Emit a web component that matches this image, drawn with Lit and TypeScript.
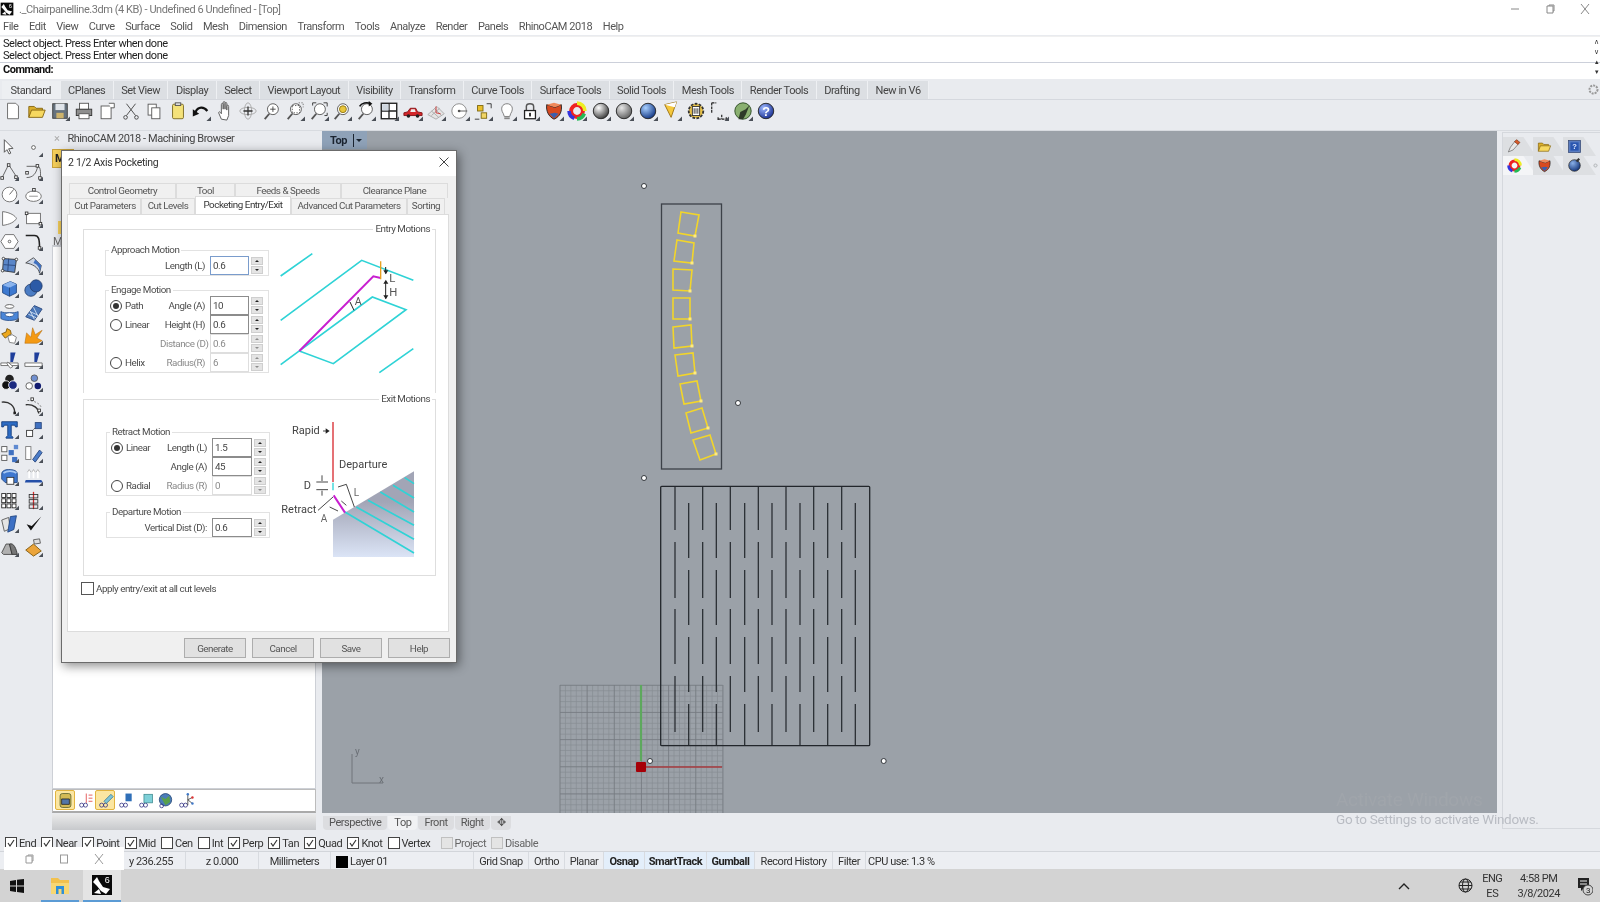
import { LitElement, html, css, svg } from 'lit';
import { customElement } from 'lit/decorators.js';

/* ---------- icons, all on a 22x22 box ---------- */
const G = '#4a4f57';
const page = (x: number, y: number, w: number, h: number) => svg`<rect x=${x} y=${y} width=${w} height=${h} fill="#fff" stroke="#5a5a5a"/>`;
const glass = (inner: unknown = '') => svg`<circle cx="12" cy="9" r="6" fill="#fff" stroke="#555"/><path d="M8 14l-5 6" stroke="#555" stroke-width="2"/>${inner}`;
const ball = (hi: string, lo: string, id: string) => svg`<defs><radialGradient id=${id} cx=".35" cy=".3" r=".8"><stop offset="0" stop-color=${hi}/><stop offset="1" stop-color=${lo}/></radialGradient></defs><circle cx="11" cy="11" r="8.5" fill="url(#${id})" stroke="#222"/>`;

const ICONS: Record<string, unknown> = {
  new: svg`<path d="M5 2.5h9l3 3v14H5z" fill="#fff" stroke="#666"/>`,
  open: svg`<path d="M2 18V6h6l2 2h7v3" fill="#d9ae2c" stroke="#84640f"/><path d="M2 18l3-8h15l-3 8z" fill="#f6d860" stroke="#84640f"/>`,
  save: svg`<rect x="3" y="3" width="16" height="16" fill="#66727e" stroke="#3c3c3c"/><rect x="6" y="3" width="10" height="7" fill="#dfe4ea"/><rect x="7" y="13" width="8" height="6" fill="#cdb36c"/>`,
  print: svg`<rect x="6" y="2.5" width="10" height="7" fill="#fff" stroke="#555"/><rect x="2.5" y="9" width="17" height="7" fill="#8e8e8e" stroke="#333"/><rect x="5.5" y="14" width="11" height="5.5" fill="#fff" stroke="#555"/>`,
  pagecopy: svg`${page(4.5, 5.5, 11, 14)}<path d="M13 2.5h6v5h-4" fill="#fff" stroke="#555"/>`,
  cut: svg`<path d="M6 3l10 13M16 3L6 16" stroke="#444" fill="none"/><circle cx="5" cy="18" r="2" fill="none" stroke="#444"/><circle cx="17" cy="18" r="2" fill="none" stroke="#444"/>`,
  copy: svg`${page(4.5, 3.5, 9, 12)}${page(8.5, 7.5, 9, 12)}`,
  paste: svg`<rect x="5" y="3.5" width="12" height="16" rx="1.5" fill="#f4e27a" stroke="#7a6a20"/><rect x="8" y="2" width="6" height="3" fill="#ddd" stroke="#555"/>`,
  undo: svg`<path d="M5 12c3-6 9-6 13-1" fill="none" stroke="#111" stroke-width="2.4"/><path d="M2 9l7 5-7 3z" fill="#111"/>`,
  hand: svg`<path d="M7 20l-3-7c0-2 2-1 3 1V4c0-2 2-2 2 0v5-7c0-2 2-2 2 0v7-6c0-2 2-2 2 0v7-4c0-2 2-2 2 0v10l-2 5z" fill="#fff" stroke="#555"/>`,
  orbit: svg`<ellipse cx="11" cy="11" rx="9" ry="4" fill="none" stroke="#a8a8a8"/><ellipse cx="11" cy="11" rx="4" ry="9" fill="none" stroke="#a8a8a8"/><path d="M11 6v10M6 11h10" stroke="#333" stroke-width="1.4"/>`,
  zoomin: glass(svg`<path d="M9 9h6M12 6v6" stroke="#444"/>`),
  zoomwin: glass(svg`<rect x="8" y="5" width="8" height="8" fill="none" stroke="#555" stroke-dasharray="1.5 1.5"/><path d="M15 2h5v5" fill="none" stroke="#777" stroke-dasharray="1.5 1.5"/>`),
  zoomext: glass(svg`<path d="M4 5V2h4M16 2h4v4M20 13v3h-3" fill="none" stroke="#333"/>`),
  zoomsel: glass(svg`<circle cx="12" cy="9" r="3.8" fill="#e9c63c" stroke="#8e7412"/>`),
  zoomback: glass(svg`<path d="M4 6c2-4 8-5 12-3" fill="none" stroke="#111" stroke-width="1.8"/><path d="M14 0l4 3-4 3z" fill="#111"/>`),
  panes: svg`<rect x="2.5" y="2.5" width="17" height="17" fill="#fff" stroke="#222" stroke-width="1.5"/><path d="M11 2.5v17M2.5 11h17" stroke="#222" stroke-width="1.5"/><rect x="3.5" y="3.5" width="7" height="7" fill="#cfd6de"/>`,
  car: svg`<path d="M1 13l4-1 3-4h6l2 4 5 1v3H1z" fill="#d3262a" stroke="#851316"/><circle cx="6" cy="16.5" r="2" fill="#222"/><circle cx="16" cy="16.5" r="2" fill="#222"/><path d="M9 9h4l1 3H8z" fill="#eee"/>`,
  cplane: svg`<path d="M2 15l10-9 8 8-9 6z" fill="#e4e4e4" stroke="#aaa"/><path d="M6 11l8 7M9 8l8 8M6 16l9-8" stroke="#aaa" fill="none"/><path d="M11 13V6M11 13l5 1" stroke="#c33" fill="none"/>`,
  target: svg`<circle cx="10" cy="11" r="8" fill="#fff" stroke="#888"/><path d="M10 11h9" stroke="#555"/><circle cx="10" cy="11" r="1.5" fill="#555"/>`,
  points: svg`<rect x="5" y="5" width="6" height="6" fill="#e9bf2c" stroke="#806a10"/><rect x="9" y="13" width="6" height="6" fill="#f1d565" stroke="#806a10"/><path d="M15 3h5v5M2 20h5" stroke="#333" fill="none"/>`,
  bulb: svg`<path d="M7 14C3 8 6 3 11 3s8 5 4 11l-1 3H8z" fill="#fff" stroke="#777"/><path d="M8 18h6v2H8z" fill="#888"/>`,
  lock: svg`<path d="M7 11V6c0-4 8-4 8 0v5" fill="none" stroke="#555" stroke-width="1.6"/><rect x="5" y="10.5" width="12" height="9" fill="#fff" stroke="#222" stroke-width="1.4"/><rect x="10" y="13" width="2" height="4" fill="#222"/>`,
  shield: svg`<path d="M3 4l9 3 7-3c1 7-1 13-8 16C5 17 2 11 3 4z" fill="#d84a20" stroke="#222"/><path d="M3 4l9 3 7-3-8-2z" fill="#f08a5c"/><path d="M6 14l6-1 4 1-5 5z" fill="#3b5fae"/>`,
  wheel: svg`<circle cx="11" cy="11" r="6.5" fill="none" stroke="#e22" stroke-width="4.4"/><path d="M11 2.3a8.7 8.7 0 0 1 8.7 8.7" fill="none" stroke="#ee2" stroke-width="4"/><path d="M19 14a8.7 8.7 0 0 1-8 5.7" fill="none" stroke="#2b5" stroke-width="4"/><path d="M8 19a8.7 8.7 0 0 1-5.7-8" fill="none" stroke="#33d" stroke-width="4"/>`,
  sphere1: ball('#ffffff', '#2b2b2b', 'sa'),
  sphere2: ball('#e6e6e6', '#555555', 'sb'),
  sphere3: ball('#a8d0ff', '#062a7a', 'sc'),
  cone: svg`<path d="M3 4l13-3-6 17z" fill="#f5c83c" stroke="#9a6f10"/><path d="M3 4l13-3-2 6z" fill="#fff"/>`,
  gear: svg`<circle cx="11" cy="11" r="8" fill="#e7c24a" stroke="#333" stroke-dasharray="3 1.5" stroke-width="2"/><rect x="7" y="6" width="8" height="10" fill="#fff" stroke="#333"/><path d="M9 8v6M11 8v6M13 8v6" stroke="#333"/>`,
  dim: svg`<path d="M3 2h5M3 2v11M10 20h9M14 15v5M10 18v4M19 18v4" fill="none" stroke="#222" stroke-width="1.3" stroke-dasharray="3 1"/>`,
  earth: svg`<circle cx="11" cy="11" r="9" fill="#8ab070" stroke="#2b4a22"/><path d="M6 20l2-8 6-3 4-4-4 10-3 5z" fill="#2e3a28"/>`,
  help: svg`${ball('#9db8ff', '#10268a', 'sd')}<text x="11" y="16" text-anchor="middle" font-size="14" font-weight="700" fill="#fff" font-family="Liberation Sans">?</text>`,
  pick: svg`<path d="M5 2l10 10-5 .5 2.5 5-2 1-2.5-5-3 3z" fill="#fff" stroke="#444"/>`,
  dot: svg`<circle cx="11" cy="11" r="2.2" fill="#fff" stroke="#555"/>`,
  polyline: svg`<path d="M2 19L10 3l9 14" fill="none" stroke="#555"/><rect x="8.5" y="2" width="3" height="3" fill="#fff" stroke="#333"/><rect x="1" y="17" width="3" height="3" fill="#fff" stroke="#333"/><rect x="17" y="16" width="3" height="3" fill="#fff" stroke="#333"/>`,
  curve: svg`<path d="M3 5h13c4 0 3 11 3 13M3 18c8 0 11-5 13-13" fill="none" stroke="#555"/><rect x="14" y="3" width="3" height="3" fill="#fff" stroke="#333"/><rect x="2" y="11" width="3" height="3" fill="#fff" stroke="#333"/><rect x="17" y="17" width="3" height="3" fill="#fff" stroke="#333"/>`,
  circle: svg`<circle cx="11" cy="11" r="8.5" fill="#fff" stroke="#666"/><path d="M11 11l5-6" stroke="#555"/>`,
  ellipse: svg`<ellipse cx="11" cy="13" rx="9" ry="6" fill="#fff" stroke="#666"/><path d="M6 13h10" stroke="#888"/><rect x="10" y="4" width="3" height="3" fill="#fff" stroke="#333"/>`,
  dshape: svg`<path d="M3 3c9 1 15 5 16 8-2 4-8 7-16 8z" fill="#fff" stroke="#666"/>`,
  rect: svg`<rect x="3" y="5" width="16" height="12" fill="#fff" stroke="#666"/><rect x="1.5" y="3.5" width="3" height="3" fill="#fff" stroke="#333"/><rect x="17.5" y="15.5" width="3" height="3" fill="#fff" stroke="#333"/>`,
  hex: svg`<path d="M6 3h10l5 8-5 8H6l-5-8z" fill="#fff" stroke="#666"/><circle cx="11" cy="11" r="1.5" fill="none" stroke="#555"/>`,
  fillet: svg`<path d="M2 4h10c5 0 6 4 6 15" fill="none" stroke="#222" stroke-width="1.8"/><rect x="16.5" y="17" width="3" height="3" fill="#fff" stroke="#333"/><path d="M2 8" stroke="#999"/>`,
  patch: svg`<path d="M4 3l15 1-2 15L3 17z" fill="#5a86c8" stroke="#333"/><path d="M4 10l14 1M10 3l-1 15" stroke="#28467c"/><circle cx="4" cy="3" r="1.5" fill="#fff" stroke="#333"/><circle cx="19" cy="4" r="1.5" fill="#fff" stroke="#333"/><circle cx="3" cy="17" r="1.5" fill="#fff" stroke="#333"/>`,
  fold: svg`<path d="M2 8l9-6 9 9-2 9c-1-7-9-11-16-12z" fill="#c9d4e6" stroke="#444"/><path d="M11 8c5 2 8 6 7 12l2-9-7-7z" fill="#3f70c0"/>`,
  cube: svg`<path d="M3 7l9-4 7 3v10l-8 4-8-4z" fill="#3d79d0" stroke="#22477f"/><path d="M3 7l8 3 8-4-7-3z" fill="#8ab4ee"/><path d="M11 10v10" stroke="#22477f"/>`,
  spheres: svg`<circle cx="8" cy="13" r="7" fill="#4a7cc4" stroke="#243f6e"/><circle cx="14" cy="8" r="7" fill="#2c5aa6" stroke="#243f6e"/>`,
  cyl: svg`<ellipse cx="11" cy="4" rx="5" ry="2.2" fill="#fff" stroke="#555"/><path d="M1 10c4 2 16 2 20 0v8c-4 3-16 3-20 0z" fill="#4a86d8" stroke="#28508c"/><ellipse cx="11" cy="13.5" rx="5" ry="2.3" fill="#fff" stroke="#28508c"/>`,
  gridplane: svg`<path d="M2 16L12 3l9 4-9 13z" fill="#4a77b8" stroke="#28467c"/><path d="M7 10l9 4M5 13l9 4M7 9l5 10M11 5l5 10" stroke="#d7e4f6"/>`,
  puzzle: svg`<path d="M2 9l5-2 1-4 4 2 1 4-4 3-3 2z" fill="#eda81e" stroke="#7a560c"/><path d="M9 12l5-2 5 3-2 7-6-1z" fill="#fff" stroke="#777"/>`,
  spark: svg`<path d="M1 20L3 8l5 5 2-11 3 8 8-5-6 9 6 3-6 3z" fill="#f49a14" stroke="#b36a06" stroke-width=".6"/>`,
  flag1: svg`<path d="M1 15h20v3H1z" fill="#fff" stroke="#666"/><path d="M12 3h6l-3 11h-3z" fill="#1f3f9c"/><path d="M9 14l6 5-3 2-4-5z" fill="#fff" stroke="#666"/>`,
  flag2: svg`<path d="M1 15h20v4H1z" fill="#fff" stroke="#666"/><path d="M12 3h6l-3 11h-3z" fill="#1f3f9c"/>`,
  trio1: svg`<circle cx="11" cy="7" r="5" fill="#222"/><circle cx="7" cy="14" r="5" fill="#111" stroke="#fff"/><circle cx="15" cy="14" r="5" fill="#1b2a80" stroke="#fff"/>`,
  trio2: svg`<circle cx="12" cy="6" r="3.8" fill="#6f8fd0" stroke="#555"/><circle cx="6" cy="15" r="3.8" fill="#fff" stroke="#555"/><circle cx="16" cy="15" r="3.8" fill="#111b70"/>`,
  arc: svg`<path d="M2 6c9-1 15 4 15 12" fill="none" stroke="#333" stroke-width="1.6"/><rect x="15.5" y="17" width="3" height="3" fill="#222"/>`,
  arc2: svg`<path d="M2 9c9-1 15 4 15 10" fill="none" stroke="#333" stroke-width="1.6"/><path d="M4 4c7 0 14 3 16 8" fill="none" stroke="#666" stroke-dasharray="2 2"/><rect x="8" y="1" width="3" height="3" fill="#fff" stroke="#333"/><rect x="16" y="14" width="3" height="3" fill="#fff" stroke="#333"/>`,
  letter: svg`<path d="M2 2h18v6h-2l-1-2h-4v12l2 2v1H7v-1l2-2V6H5L4 8H2z" fill="#2d6cc4" stroke="#123a78"/>`,
  scale: svg`<rect x="3" y="12" width="7" height="7" fill="#fff" stroke="#333"/><rect x="13" y="3" width="7" height="7" fill="#3f70c0" stroke="#28467c"/><path d="M10 12l3-3" stroke="#333" stroke-dasharray="1.5 1"/>`,
  arrayp: svg`<rect x="2" y="3" width="6" height="6" fill="#fff" stroke="#555"/><rect x="10" y="7" width="6" height="6" fill="#3f70c0"/><rect x="16" y="1" width="5" height="5" fill="#5f8ad0"/><rect x="2" y="13" width="6" height="6" fill="#fff" stroke="#555"/><rect x="14" y="15" width="6" height="6" fill="#3f70c0"/>`,
  mirror: svg`<rect x="2" y="3" width="6" height="15" fill="#fff" stroke="#777"/><path d="M10 18l8-11 3 3-8 11z" fill="#4a7cc8" stroke="#28467c"/>`,
  boxcut: svg`<path d="M2 8c0-3 3-5 8-5s10 1 10 5v10H6l-4-4z" fill="#3f78d0" stroke="#20457f"/><path d="M4 7c4-3 11-3 15 0" fill="none" stroke="#a8c8f2" stroke-width="2"/><rect x="8" y="12" width="8" height="8" fill="#fff" stroke="#333"/>`,
  lift: svg`<path d="M2 15h18l2 3H1z" fill="#244fa8"/><path d="M6 4v9M11 4v9M16 4v9" stroke="#fff" stroke-width="2"/><path d="M4 6l2-3 2 3M9 6l2-3 2 3M14 6l2-3 2 3" fill="#fff" stroke="#666" stroke-width=".5"/>`,
  dots: svg`${[3, 9, 15].map((y) => [2, 8, 14].map((x) => svg`<rect x=${x} y=${y} width="4.5" height="4.5" fill="#fff" stroke="#222"/>`))}`,
  split: svg`<path d="M11 1v20" stroke="#d32a2a" stroke-width="1.5"/><rect x="6" y="4" width="10" height="4" fill="none" stroke="#333"/><rect x="6" y="10" width="10" height="4" fill="none" stroke="#333"/><rect x="6" y="16" width="10" height="4" fill="none" stroke="#333"/>`,
  bend: svg`<path d="M2 7l8-3 2 13-7 3z" fill="#e4e4e4" stroke="#555"/><path d="M12 3l7-1-3 16-7 3z" fill="#3d70c4" stroke="#20457f"/>`,
  check: svg`<path d="M3 12l5 7L20 3l-11 11z" fill="#111"/>`,
  shapes: svg`<path d="M2 17l5-10h4l3 12H4z" fill="#b0b0b0" stroke="#444"/><path d="M11 7c5-2 8 6 9 12h-6z" fill="#777" stroke="#333"/>`,
  diamond: svg`<path d="M2 14l9-7 9 8-9 6z" fill="#eba43a" stroke="#7a560c"/><path d="M11 2l7-1 1 5-7 1z" fill="#ddd" stroke="#555"/>`,
  book: svg`<rect x="4" y="2" width="14" height="18" rx="3" fill="#d3ba55" stroke="#4f5a26"/><path d="M6 9h10v7H6z" fill="#5276a8" stroke="#222"/>`,
  tree: svg`<circle cx="6" cy="17" r="2.6" fill="none" stroke="#2c2c80"/><circle cx="11" cy="17" r="2.6" fill="none" stroke="#2c2c80"/><path d="M12 2v12M15 4h5M15 8h5M15 12h5" stroke="#d33" fill="none"/>`,
  tool: svg`<circle cx="6" cy="17" r="2.6" fill="none" stroke="#2c2c80"/><circle cx="11" cy="17" r="2.6" fill="none" stroke="#2c2c80"/><path d="M9 12l9-9 3 3-9 9z" fill="#7ec3d8" stroke="#39788c"/>`,
  stock: svg`<circle cx="6" cy="17" r="2.6" fill="none" stroke="#2c2c80"/><circle cx="11" cy="17" r="2.6" fill="none" stroke="#2c2c80"/><rect x="11" y="2" width="8" height="10" fill="#2f6fb8"/>`,
  cubec: svg`<circle cx="6" cy="17" r="2.6" fill="none" stroke="#2c2c80"/><circle cx="11" cy="17" r="2.6" fill="none" stroke="#2c2c80"/><rect x="9" y="3" width="11" height="11" fill="#7ed0d8" stroke="#3e8a90"/>`,
  globe2: svg`<circle cx="11" cy="10" r="8" fill="#4a7cb8" stroke="#1e4070"/><path d="M5 6l6 3 5-4 1 8-6 4-3-5z" fill="#58a04c"/><circle cx="6" cy="18" r="2.4" fill="none" stroke="#2c2c80"/>`,
  nodes: svg`<circle cx="6" cy="17" r="2.6" fill="none" stroke="#2c2c80"/><circle cx="11" cy="17" r="2.6" fill="none" stroke="#2c2c80"/><path d="M14 3v14M14 10l6-3M14 10l6 5" stroke="#333" fill="none"/><circle cx="14" cy="3" r="1.6" fill="#3f78c8"/><circle cx="20" cy="7" r="1.6" fill="#d33"/><circle cx="20" cy="15" r="1.6" fill="#3f78c8"/>`,
  folder: svg`<path d="M2 4h7l2 2h9v14H2z" fill="#f2c14e"/><rect x="2" y="9" width="18" height="11" fill="#f7d774"/><rect x="7" y="12" width="8" height="8" fill="#2f8fd8"/><rect x="9.5" y="15" width="3" height="5" fill="#f7d774"/>`,
  rhino: svg`<rect x="1" y="1" width="20" height="20" fill="#0a0a0a"/><path d="M2 8l4-5 2 4 4 6 7 2-4 5-5-3-4-5z" fill="#fff"/><path d="M3 19l5-4 2 5z" fill="#fff"/><text x="16" y="9" font-size="9" fill="#fff" font-family="Liberation Sans" text-anchor="middle">6</text>`,
  brush: svg`<path d="M2 19l3-7 7-9 5 4-8 9z" fill="#e8e8e8" stroke="#666"/><path d="M11 4l3-3 5 4-3 3z" fill="#d85a2a" stroke="#7a3414"/>`,
  bookq: svg`<rect x="2" y="2" width="18" height="18" fill="#5a7cc0" stroke="#35466e"/><rect x="5" y="5" width="12" height="12" fill="#2a56b0"/><text x="11" y="15" text-anchor="middle" font-size="11" font-weight="700" fill="#dfe8ff" font-family="Liberation Sans">?</text>`,
  bomb: svg`${ball('#8ab0e8', '#0a2a70', 'se')}<path d="M14 5l4-4" stroke="#333" stroke-width="3"/>`,
  cog: svg`<circle cx="11" cy="11" r="6" fill="none" stroke="#b4b7bb" stroke-width="4"/><circle cx="11" cy="11" r="8.5" fill="none" stroke="#b4b7bb" stroke-width="2" stroke-dasharray="2.5 2"/>`,
};

const TOOLBAR = ['new', 'open', 'save', 'print', 'pagecopy', 'cut', 'copy', 'paste', 'undo', 'hand', 'orbit', 'zoomin', 'zoomwin', 'zoomext', 'zoomsel', 'zoomback', 'panes', 'car', 'cplane', 'target', 'points', 'bulb', 'lock', 'shield', 'wheel', 'sphere1', 'sphere2', 'sphere3'];
const TOOLBAR2 = ['cone', 'gear', 'dim', 'earth', 'help'];
const LEFTBAR = ['pick', 'dot', 'polyline', 'curve', 'circle', 'ellipse', 'dshape', 'rect', 'hex', 'fillet', 'patch', 'fold', 'cube', 'spheres', 'cyl', 'gridplane', 'puzzle', 'spark', 'flag1', 'flag2', 'trio1', 'trio2', 'arc', 'arc2', 'letter', 'scale', 'arrayp', 'mirror', 'boxcut', 'lift', 'dots', 'split', 'bend', 'check', 'shapes', 'diamond'];
const BROWSER_TOOLS = ['book', 'tree', 'tool', 'stock', 'cubec', 'globe2', 'nodes'];
const NO_CORNER = new Set(['new', 'open', 'print', 'pagecopy', 'cut', 'copy', 'paste', 'hand', 'orbit', 'zoomin', 'pick', 'check', 'help', 'book', 'tree', 'tool', 'stock', 'cubec', 'globe2', 'nodes', 'folder', 'rhino', 'gear']);

const icon = (name: string, cls = 'ico') => html`<svg class=${cls} viewBox="0 0 22 22">${ICONS[name]}${NO_CORNER.has(name) ? '' : svg`<path d="M22 17v5h-5z" fill=${G}/>`}</svg>`;

/* ---------- static text ---------- */
const MENU = ['File', 'Edit', 'View', 'Curve', 'Surface', 'Solid', 'Mesh', 'Dimension', 'Transform', 'Tools', 'Analyze', 'Render', 'Panels', 'RhinoCAM 2018', 'Help'];
const TABS = ['Standard', 'CPlanes', 'Set View', 'Display', 'Select', 'Viewport Layout', 'Visibility', 'Transform', 'Curve Tools', 'Surface Tools', 'Solid Tools', 'Mesh Tools', 'Render Tools', 'Drafting', 'New in V6'];
const OSNAPS: [string, boolean, boolean?][] = [['End', true], ['Near', true], ['Point', true], ['Mid', true], ['Cen', false], ['Int', false], ['Perp', true], ['Tan', true], ['Quad', true], ['Knot', true], ['Vertex', false], ['Project', false, true], ['Disable', false, true]];
const PANES: [string, boolean?][] = [['Grid Snap'], ['Ortho'], ['Planar'], ['Osnap', true], ['SmartTrack', true], ['Gumball', true], ['Record History'], ['Filter']];

/* squares on the chair panel, as read off the reference */
const SQUARES = [
  [[681, 211], [699, 214], [695, 235], [678, 232]],
  [[677, 239], [694, 242], [692, 262], [674, 260]],
  [[673, 268], [692, 269], [690, 290], [673, 289]],
  [[673, 297], [690, 297], [690, 318], [673, 318]],
  [[673, 326], [691, 324], [692, 345], [674, 347]],
  [[675, 354], [693, 352], [695, 372], [678, 375]],
  [[680, 383], [697, 380], [701, 400], [684, 403]],
  [[686, 412], [702, 407], [708, 427], [691, 432]],
  [[693, 439], [710, 434], [716, 453], [700, 459]],
];
const ODD_X = [675, 702.7, 730.3, 758.3, 786, 813.7, 841.7];
const EVEN_X = [688.7, 716.3, 744.7, 772, 800, 827.7, 855.3];
const ODD_Y = [[485, 529], [541, 597], [608, 663], [675, 731]];
const EVEN_Y = [[502, 557], [569, 624], [636, 691], [703, 745]];
const range = (a: number, b: number, step: number) => { const r: number[] = []; for (let v = a; v <= b + .01; v += step) r.push(v); return r; };

@customElement('pocket-dialog')
export class PocketDialog extends LitElement {
  static styles = css`
    :host { display: flex; flex-direction: column; position: absolute; left: 61px; top: 150px; width: 396px; height: 513px; box-sizing: border-box;
      background: #f0f0f0; border: 1px solid #6b6b6b; box-shadow: 2px 3px 10px rgba(0,0,0,.45); font: 9.8px Roboto, "Liberation Sans", sans-serif; letter-spacing: -.45px; color: #4c4c4c; }
    .bar { height: 25px; background: #fff; display: flex; align-items: center; justify-content: space-between; padding: 0 6px 3px; box-sizing: border-box; font-size: 10.5px; letter-spacing: -.3px; color: #333; }
    .close { width: 12px; height: 12px; stroke: #444; fill: none; }
    .tabrow { display: grid; height: 15px; margin-left: 7px; }
    .top1 { margin-top: 7px; grid-template-columns: 107px 59px 106px 107px; }
    .top2 { height: 16px; grid-template-columns: 72px 54px 96px 116px 38px; }
    .tab { display: flex; align-items: center; justify-content: center; background: #f0f0f0; border: 1px solid #dcdcdc; border-bottom: 0; box-sizing: border-box; white-space: nowrap; color: #555; padding-bottom: 2px; }
    .tab.on { background: #fff; height: 18px; margin-top: -2px; position: relative; z-index: 1; color: #333; }
    .page { margin: 0 7px 0 5px; background: #fff; border: 1px solid #dcdcdc; height: 418px; box-sizing: border-box; padding: 8px 12px 0 15px; }
    fieldset { margin: 0; padding: 0; border: 1px solid #dedede; min-width: 0; }
    .sect { height: 170px; border-bottom: 0; box-sizing: border-box; padding: 9px 0 0 21px; }
    .sect.exit { height: 183px; border-bottom: 1px solid #dedede; padding: 21px 0 0 22px; }
    .sect > legend { margin-left: auto; margin-right: 3px; padding: 0 2px; line-height: 12px; }
    .row { display: flex; align-items: flex-start; gap: 13px; }
    .forms { width: 164px; display: flex; flex-direction: column; gap: 8px; }
    .exit .forms { gap: 10px; }
    .grp { border-color: #e2e2e2; padding: 0; }
    .grp > legend { margin-left: 3px; padding: 0 2px; line-height: 12px; }
    .line { display: grid; grid-template-columns: 48px minmax(0, 1fr) 39px 12px; align-items: center; column-gap: 2px; height: 19px; padding: 0 5px 0 4px; }
    .exit .line { grid-template-columns: 48px minmax(0, 1fr) 40px 12px; padding-right: 3px; }
    .exit .line.wide { grid-template-columns: 16px minmax(0, 1fr) 40px 12px; }
    .line .cap { text-align: right; padding-right: 3px; white-space: nowrap; }
    .line.off .cap, .line.off .field { color: #8a8a8a; }
    .radio { display: flex; align-items: center; gap: 3px; white-space: nowrap; }
    .dot { width: 10px; height: 10px; border: 1px solid #444; border-radius: 50%; background: #fff; display: block; position: relative; flex: none; }
    .dot.on::after { content: ''; position: absolute; inset: 2px; border-radius: 50%; background: #333; }
    .field { height: 19px; border: 1px solid #8c8c8c; background: #fff; box-sizing: border-box; padding: 0 2px; color: #444; display: flex; align-items: center; }
    .field.focus { border-color: #7a9ccc; }
    .field.off { border-color: #dedede; }
    .spin { display: flex; flex-direction: column; gap: 1px; height: 17px; }
    .spin i { flex: 1; background: #e4e4e4; border: 1px solid #cfcfcf; position: relative; }
    .spin i::after { content: ''; position: absolute; left: 3px; top: 2px; border: 2.5px solid transparent; }
    .spin i:first-child::after { border-bottom-color: #222; border-top-width: 0; }
    .spin i:last-child::after { border-top-color: #222; border-bottom-width: 0; }
    .off .spin i::after { opacity: .45; }
    svg text { font-family: Roboto, "Liberation Sans", sans-serif; letter-spacing: 0; }
    .fig1 { width: 135px; height: 125px; margin-top: 8px; margin-left: -2px; flex: none; }
    .fig2 { width: 134px; height: 135px; margin-top: -4px; margin-left: -2px; flex: none; }
    .chk { display: flex; align-items: center; gap: 2px; margin: 6px 0 0 -2px; }
    .box { width: 11px; height: 11px; border: 1px solid #555; background: #fff; display: block; }
    .btns { display: grid; grid-template-columns: repeat(4, 62px); column-gap: 6px; padding: 6px 0 0 122px; }
    .btn { height: 18px; background: #e1e1e1; border: 1px solid #adadad; display: flex; align-items: center; justify-content: center; color: #555; }
  `;

  private spin() { return html`<span class="spin"><i></i><i></i></span>`; }

  private line(radio: string | null, on: boolean, cap: string, val: string, cls = '', wide = false) {
    const off = cls === 'off';
    return html`<div class="line ${off ? 'off' : ''} ${wide ? 'wide' : ''}">
      <span class="radio">${radio ? html`<span class="dot ${on ? 'on' : ''}"></span>${radio}` : ''}</span>
      <span class="cap">${cap}</span>
      <span class="field ${cls}">${val}</span>
      ${this.spin()}
    </div>`;
  }

  render() {
    const cy = '#2fd3d6';
    return html`
      <div class="bar"><span>2 1/2 Axis Pocketing</span><svg class="close" viewBox="0 0 12 12"><path d="M1.5 1.5l9 9M10.5 1.5l-9 9"/></svg></div>
      <div class="tabrow top1">${['Control Geometry', 'Tool', 'Feeds & Speeds', 'Clearance Plane'].map((t) => html`<span class="tab">${t}</span>`)}</div>
      <div class="tabrow top2">${['Cut Parameters', 'Cut Levels', 'Pocketing Entry/Exit', 'Advanced Cut Parameters', 'Sorting'].map((t, i) => html`<span class="tab ${i === 2 ? 'on' : ''}">${t}</span>`)}</div>
      <div class="page">
        <fieldset class="sect"><legend>Entry Motions</legend>
          <div class="row">
            <div class="forms">
              <fieldset class="grp"><legend>Approach Motion</legend>${this.line(null, false, 'Length (L)', '0.6', 'focus')}</fieldset>
              <fieldset class="grp"><legend>Engage Motion</legend>
                ${this.line('Path', true, 'Angle (A)', '10')}
                ${this.line('Linear', false, 'Height (H)', '0.6')}
                ${this.line(null, false, 'Distance (D)', '0.6', 'off')}
                ${this.line('Helix', false, 'Radius(R)', '6', 'off')}
              </fieldset>
            </div>
            <svg class="fig1" viewBox="660 330 405 375">
              <path d="M662 402L757 335M662 535L905 355L1060 415M662 668L937 465L1038 503L820 665L718 627M958 692L1060 620" fill="none" stroke=${cy} stroke-width="5"/>
              <path d="M718 627L940 403L962 408" fill="none" stroke="#c81fd0" stroke-width="6"/>
              <path d="M962 358V412" stroke="#e8a020" stroke-width="4"/>
              <path d="M977 375V395M977 420V470M870 480L882 505" stroke="#222" stroke-width="3"/>
              <path d="M970 385h15l-7.5 12zM970 425h15l-7.5-12zM970 460h15l-7.5 12z" fill="#222"/>
              <text x="988" y="420" font-size="34" fill="#555">L</text>
              <text x="988" y="462" font-size="34" fill="#555">H</text>
              <text x="884" y="488" font-size="32" fill="#555">A</text>
            </svg>
          </div>
        </fieldset>
        <fieldset class="sect exit"><legend>Exit Motions</legend>
          <div class="row">
            <div class="forms">
              <fieldset class="grp"><legend>Retract Motion</legend>
                ${this.line('Linear', true, 'Length (L)', '1.5')}
                ${this.line(null, false, 'Angle (A)', '45')}
                ${this.line('Radial', false, 'Radius (R)', '0', 'off')}
              </fieldset>
              <fieldset class="grp"><legend>Departure Motion</legend>${this.line(null, false, 'Vertical Dist (D):', '0.6', '', true)}</fieldset>
            </div>
            <svg class="fig2" viewBox="665 95 400 405">
              <defs><linearGradient id="gr" x1="0" y1="0" x2="0" y2="1"><stop offset=".35" stop-color="#a2a5b6"/><stop offset="1" stop-color="#dbe4f6"/></linearGradient></defs>
              <path d="M820 388L1063 243V500H820z" fill="url(#gr)"/>
              <path d="M856 365L1063 488M890 350L1063 447M925 330L1063 405M962 305L1063 365M1000 285L1063 323M1035 262L1063 280" fill="none" stroke=${cy} stroke-width="5"/>
              <path d="M820 95V275" stroke="#d82a30" stroke-width="4"/>
              <path d="M820 277V300" stroke=${cy} stroke-width="4"/>
              <path d="M822 315L856 367" stroke="#c81fd0" stroke-width="6"/>
              <path d="M770 275H805M770 298H805M787 255V272M787 301V316M790 122H800M835 290L860 282M860 282L884 350M820 320L775 360M845 332L860 345M810 350L835 362" fill="none" stroke="#222" stroke-width="2.5"/>
              <path d="M798 114l12 8-12 8z" fill="#222"/>
              <text x="697" y="132" font-size="33" fill="#444">Rapid</text>
              <text x="838" y="232" font-size="33" fill="#444">Departure</text>
              <text x="732" y="296" font-size="33" fill="#444">D</text>
              <text x="665" y="368" font-size="33" fill="#444">Retract</text>
              <text x="783" y="396" font-size="30" fill="#666">A</text>
              <text x="882" y="316" font-size="30" fill="#666">L</text>
            </svg>
          </div>
        </fieldset>
        <div class="chk"><span class="box"></span>Apply entry/exit at all cut levels</div>
      </div>
      <div class="btns">${['Generate', 'Cancel', 'Save', 'Help'].map((b) => html`<span class="btn">${b}</span>`)}</div>
    `;
  }
}

@customElement('app-root')
export class AppRoot extends LitElement {
  static styles = css`
    :host { display: block; width: 1600px; height: 902px; overflow: hidden; }
    .app { position: relative; width: 1600px; height: 902px; display: flex; flex-direction: column; background: #e9ebef; overflow: hidden;
      font: 11px Roboto, "Liberation Sans", sans-serif; letter-spacing: -.45px; color: #444; filter: blur(.35px); }
    .ico { width: 20px; height: 20px; display: block; }

    .title { height: 18px; background: #fff; display: flex; align-items: center; color: #777; gap: 5px; flex: none; }
    .title .logo { width: 14px; height: 14px; display: block; }
    .winbtns { margin-left: auto; display: flex; gap: 25px; padding-right: 10px; align-items: center; }
    .winbtns svg { width: 10px; height: 10px; fill: none; stroke: #888; display: block; }
    .menu { height: 17px; background: #fff; display: flex; gap: 10.5px; align-items: center; padding-left: 3px; color: #555; flex: none; }

    .cmd { flex: none; height: 43px; margin-top: 1px; background: #fff; border-top: 1px solid #f0f0f0; position: relative; box-sizing: border-box; color: #222; }
    .cmd .hist { height: 24px; border-bottom: 1px solid #ccd0da; padding: 1px 0 0 3px; display: flex; flex-direction: column; justify-content: center; box-sizing: content-box; }
    .cmd .hist div { height: 12.5px; line-height: 12.5px; }
    .cmd .now { height: 14px; line-height: 14px; font-weight: 700; color: #111; padding-left: 3px; }
    .cmd .scroll { position: absolute; right: 0; top: 0; bottom: 0; width: 7px; display: flex; flex-direction: column; align-items: center; color: #333; font-size: 7px; }
    .cmd .scroll span { height: 10px; line-height: 10px; }

    .tabs { flex: none; height: 18px; margin-top: 2px; display: flex; padding-left: 2px; border-bottom: 1px solid #d5d8de; position: relative; }
    .tabs span { background: #dcdfe3; padding: 0 7.45px; line-height: 19px; color: #444; white-space: nowrap; border-right: 1px solid #eef0f3; }
    .tabs span.on { background: #edeff2; padding: 0 8.5px; }
    .tabs .gear { position: absolute; right: 1px; top: 3px; width: 11px; height: 11px; fill: none; stroke: #999; stroke-dasharray: 2 1; stroke-width: 2; }
    .tools { flex: none; height: 30px; display: flex; align-items: flex-start; padding: 1px 0 0 3px; box-sizing: border-box; }
    .tools .ico { margin-right: 3.5px; }
    .tools .sep { width: 1px; }

    .work { flex: 1; min-height: 0; display: grid; grid-template-columns: 50px 272px 1175px 5px 98px; border-top: 1px solid #d8dbe0; }
    .left { display: grid; grid-template-columns: 24px 24px; grid-auto-rows: 23.5px; justify-items: center; align-items: center; padding: 5px 0 0; margin-left: -3px; align-content: start; }
    .left .ico { width: 19px; height: 19px; }

    .browser { display: flex; flex-direction: column; padding: 0 6px 0 2px; }
    .bhead { height: 16px; line-height: 15px; display: flex; gap: 8px; color: #444; flex: none; padding-left: 2px; }
    .bhead i { font-style: normal; color: #aaa; }
    .btop { height: 99px; background: #e9ebef; border-bottom: 1px solid #c8cbd0; padding-top: 2px; box-sizing: border-box; flex: none; }
    .ytab { width: 22px; height: 19px; background: #f5cf5a; border: 1px solid #c9a23a; box-sizing: border-box; font-weight: 700; line-height: 17px; padding-left: 2px; color: #222; }
    .otab { width: 9px; height: 13px; background: #f5cf5a; margin: 53px 0 0 6px; }
    .mlab { line-height: 12px; color: #666; margin-top: 2px; padding-left: 1px; }
    .bpage { flex: 1; background: #fff; border: 1px solid #cdd0d6; }
    .bstrip { height: 24px; background: #fff; border: 1px solid #bcbcbc; border-bottom: 2px solid #aaa; display: flex; align-items: flex-start; padding: 0 0 0 2px; box-sizing: border-box; flex: none; }
    .bstrip span { width: 20px; height: 20px; display: flex; align-items: center; justify-content: center; box-sizing: border-box; }
    .bstrip span.hot { background: #fbe6a2; border: 1px solid #e2b440; border-radius: 2px; }
    .bstrip .ico { width: 17px; height: 17px; }
    .bfoot { height: 16px; margin: 1px 0 6px; background: linear-gradient(#eaeaea, #c7c9cc); flex: none; }

    .center { display: flex; flex-direction: column; }
    .view { flex: 1; background: #9ba1a8; position: relative; min-height: 0; }
    .view svg.cad { display: block; width: 100%; height: 100%; }
    .vtab { position: absolute; left: 0; top: 0; width: 45px; height: 18px; background: #8fa2b8; display: flex; align-items: center; font-weight: 700; color: #1b2430; padding-left: 8px; box-sizing: border-box; gap: 6px; }
    .vtab i { width: 8px; height: 13px; border-left: 1px solid #1b2430; position: relative; display: block; }
    .vtab i::after { content: ''; position: absolute; top: 5px; left: 2px; border: 3px solid transparent; border-top-color: #1b2430; border-bottom-width: 0; }
    .vtabs { height: 23px; display: flex; align-items: flex-start; padding: 3px 0 0 1px; box-sizing: border-box; gap: 1px; flex: none; }
    .vtabs span { height: 14px; line-height: 14px; padding: 0 6px; background: #dcdde0; border-radius: 0 0 4px 4px; color: #555; }
    .vtabs span.on { background: #f1f2f4; }

    .right { border-top: 1px solid #d5d8dd; border-left: 1px solid #d5d8dd; border-bottom: 1px solid #d5d8dd; margin: 1px 0 7px; }
    .rtabs { display: grid; grid-template-columns: repeat(3, 30px) 5px; grid-auto-rows: 19px; justify-items: stretch; padding-top: 4px; }
    .rtabs span { display: flex; align-items: center; justify-content: flex-start; padding-left: 4px; background: #dddfe2; clip-path: polygon(0 0, 62% 0, 100% 100%, 0 100%); margin-right: -3px; }
    .rtabs span.on { background: #f4f5f7; }
    .rtabs .ico { width: 15px; height: 15px; }
    .rtabs .cogs { background: none; clip-path: none; margin: 0; padding: 0; }

    .osnap { flex: none; height: 17px; display: flex; align-items: center; padding: 1px 0 0 5px; box-sizing: border-box; color: #333; }
    .osnap label { display: flex; align-items: center; gap: 2px; margin-right: 5.2px; }
    .osnap .cb { width: 10px; height: 10px; border: 1px solid #444; background: #fff; display: block; }
    .osnap .cb svg { display: block; width: 10px; height: 10px; fill: none; stroke: #333; stroke-width: 1.2; }
    .osnap .dis { color: #666; margin-left: 5px; margin-right: 0; }
    .osnap .dis .cb { border-color: #c0c0c0; background: #e4e4e4; }

    .status { flex: none; height: 17px; display: grid; grid-template-columns: 124px 62px 73px 72px 143px 55px 36px 39px 41px 62px 48px 78px 33px 1fr; border-top: 1px solid #d2d5da; color: #333; background: #eceef2; line-height: 17px; }
    .status span { display: flex; align-items: center; justify-content: center; border-right: 1px solid #d8dbe0; white-space: nowrap; padding-top: 1px; }
    .status .y { justify-content: flex-start; padding-left: 5px; }
    .status .lay { justify-content: flex-start; gap: 2px; }
    .status .lay i { width: 12px; height: 12px; background: #000; display: block; margin-left: 5px; }
    .status .b { background: #e3eefa; font-weight: 700; color: #222; }
    .status .cpu { justify-content: flex-start; padding-left: 2px; border-right: 0; }

    .task { flex: none; height: 33px; background: #d3d3d3; display: flex; align-items: center; position: relative; }
    .task .win { width: 14px; height: 14px; margin-left: 10px; fill: #111; display: block; }
    .task .slot { height: 33px; width: 38px; display: flex; align-items: center; justify-content: center; border-bottom: 2px solid #5b9bd5; box-sizing: border-box; }
    .task .f { margin-left: 17px; }
    .task .r { background: #e4e4e4; margin-left: 4px; }
    .task .slot .ico { width: 22px; height: 22px; }
    .tray { margin-left: auto; display: flex; align-items: center; color: #333; }
    .tray .up { width: 12px; height: 8px; fill: none; stroke: #222; stroke-width: 1.4; margin-right: 48px; display: block; }
    .tray .globe { width: 15px; height: 15px; fill: none; stroke: #222; margin-right: 9px; display: block; }
    .stack { display: flex; flex-direction: column; align-items: center; line-height: 15px; }
    .stack.time { margin-left: 15px; margin-right: 17px; }
    .note { width: 16px; height: 22px; margin-right: 7px; display: block; }

    .strip { position: absolute; left: 4px; top: 847px; width: 120px; height: 23px; background: #fff; display: flex; align-items: center; justify-content: space-around; padding: 0 8px; box-sizing: border-box; }
    .strip svg { width: 10px; height: 10px; fill: none; stroke: #999; display: block; }
    .wm { position: absolute; left: 1336px; top: 811px; color: #b9bcc3; font-size: 13.5px; letter-spacing: -.3px; line-height: 17px; }
    .wm.big { top: 790px; font-size: 19px; line-height: 20px; color: #a0a5ab; }
  `;

  render() {
    return html`<div class="app">
      <div class="title">
        <svg class="logo" viewBox="0 0 22 22">${ICONS.rhino}</svg>
        <span>._Chairpanelline.3dm (4 KB) - Undefined 6 Undefined - [Top]</span>
        <div class="winbtns">
          <svg viewBox="0 0 10 10"><path d="M1 5h8"/></svg>
          <svg viewBox="0 0 10 10"><path d="M2 2h6v7H2zM4 2V1h5v6H8"/></svg>
          <svg viewBox="0 0 10 10"><path d="M1 0l8 10M9 0L1 10"/></svg>
        </div>
      </div>
      <div class="menu">${MENU.map((m) => html`<span>${m}</span>`)}</div>
      <div class="cmd">
        <div class="hist"><div>Select object. Press Enter when done</div><div>Select object. Press Enter when done</div></div>
        <div class="now">Command:</div>
        <div class="scroll"><span>∧</span><span>∨</span><span>▴</span><span>▾</span></div>
      </div>
      <div class="tabs">
        ${TABS.map((t, i) => html`<span class=${i === 0 ? 'on' : ''}>${t}</span>`)}
        <svg class="gear" viewBox="0 0 11 11"><circle cx="5.5" cy="5.5" r="4"/></svg>
      </div>
      <div class="tools">
        ${TOOLBAR.map((n) => icon(n))}
        <span class="sep"></span>
        ${TOOLBAR2.map((n) => icon(n))}
      </div>

      <div class="work">
        <div class="left">${LEFTBAR.map((n) => icon(n))}</div>
        <div class="browser">
          <div class="bhead"><i>×</i><span>RhinoCAM 2018 - Machining Browser</span></div>
          <div class="btop"><div class="ytab">M</div><div class="otab"></div><div class="mlab">M</div></div>
          <div class="bpage"></div>
          <div class="bstrip">${BROWSER_TOOLS.map((n, i) => html`<span class=${i === 0 || i === 2 ? 'hot' : ''}>${icon(n)}</span>`)}</div>
          <div class="bfoot"></div>
        </div>
        <div class="center">
          <div class="view">
            <svg class="cad" viewBox="322 130 1175 682">
              <g stroke="#7a7f85" stroke-width=".7" opacity=".6">
                ${range(560, 723, 5.43).map((x) => svg`<path d="M${x} 684V812"/>`)}
                ${range(684.3, 812, 5.43).map((y) => svg`<path d="M560 ${y}H722.7"/>`)}
              </g>
              <g stroke="#6a6f75" stroke-width=".8" opacity=".6">
                ${range(560, 723, 27.15).map((x) => svg`<path d="M${x} 684V812"/>`)}
                ${range(684.3, 812, 27.15).map((y) => svg`<path d="M560 ${y}H722.7"/>`)}
              </g>
              <path d="M641 684V760" stroke="#5da85d" stroke-width="2.2"/>
              <path d="M646 766H722" stroke="#a83c40" stroke-width="1.5"/>
              <rect x="636" y="761" width="10" height="10" fill="#a60008" rx="1"/>
              <path d="M352 753V782H383" fill="none" stroke="#70757b"/>
              <text x="355" y="754" font-size="10" fill="#6a6f75" font-family="Roboto">y</text>
              <text x="379" y="782" font-size="10" fill="#6a6f75" font-family="Roboto">x</text>

              <rect x="661.5" y="203" width="60" height="265" fill="none" stroke="#3c4148" stroke-width="1.3"/>
              ${SQUARES.map((s) => svg`<path d="M${s.map((p) => p.join(' ')).join('L')}Z" fill="none" stroke="#f2d52a" stroke-width="1.6"/><rect x=${s[2][0] - 1.5} y=${s[2][1] - 1.5} width="3" height="3" fill="#ffeb80"/>`)}

              <rect x="660.7" y="485.3" width="209" height="259.4" rx="1" fill="none" stroke="#22262b" stroke-width="1.3"/>
              <g stroke="#22262b" stroke-width="1.2">
                ${ODD_X.map((x) => ODD_Y.map(([a, b]) => svg`<path d="M${x} ${a}V${b}"/>`))}
                ${EVEN_X.map((x) => EVEN_Y.map(([a, b]) => svg`<path d="M${x} ${a}V${b}"/>`))}
              </g>
              ${[[644, 185], [738, 402], [644, 477], [650, 760], [883.7, 760]].map(([x, y]) => svg`<circle cx=${x} cy=${y} r="2.5" fill="#fff" stroke="#33373c"/>`)}
            </svg>
            <div class="vtab">Top<i></i></div>
          </div>
          <div class="vtabs">
            ${['Perspective', 'Top', 'Front', 'Right'].map((t) => html`<span class=${t === 'Top' ? 'on' : ''}>${t}</span>`)}
            <span>✥</span>
          </div>
        </div>
        <div></div>
        <div class="right">
          <div class="rtabs">
            ${['brush', 'open', 'bookq'].map((n) => html`<span><svg class="ico" viewBox="0 0 22 22">${ICONS[n]}</svg></span>`)}<i></i>
            ${['wheel', 'shield', 'bomb'].map((n, i) => html`<span class=${i === 0 ? 'on' : ''}><svg class="ico" viewBox="0 0 22 22">${ICONS[n]}</svg></span>`)}<span class="cogs"><svg class="ico" viewBox="0 0 22 22">${ICONS.cog}</svg></span>
          </div>
        </div>
      </div>

      <div class="osnap">
        ${OSNAPS.map(([t, on, dis]) => html`<label class=${dis ? 'dis' : ''}><span class="cb">${on ? html`<svg viewBox="0 0 10 10"><path d="M2 5l2 3 4-6"/></svg>` : ''}</span>${t}</label>`)}
      </div>
      <div class="status">
        <span></span><span class="y">y 236.255</span><span>z 0.000</span><span>Millimeters</span>
        <span class="lay"><i></i>Layer 01</span>
        ${PANES.map(([t, b]) => html`<span class=${b ? 'b' : ''}>${t}</span>`)}
        <span class="cpu">CPU use: 1.3 %</span>
      </div>
      <div class="task">
        <svg class="win" viewBox="0 0 14 14"><path d="M0 2l6-1v5.5H0zM7 .8L14 0v6.5H7zM0 7.5h6V13l-6-1zM7 7.5h7V14l-7-1z"/></svg>
        <span class="slot f"><svg class="ico" viewBox="0 0 22 22">${ICONS.folder}</svg></span>
        <span class="slot r"><svg class="ico" viewBox="0 0 22 22">${ICONS.rhino}</svg></span>
        <div class="tray">
          <svg class="up" viewBox="0 0 12 8"><path d="M1 7l5-5 5 5"/></svg>
          <svg class="globe" viewBox="0 0 15 15"><circle cx="7.5" cy="7.5" r="6.5"/><ellipse cx="7.5" cy="7.5" rx="3" ry="6.5"/><path d="M1 7.5h13M2 4h11M2 11h11"/></svg>
          <div class="stack"><span>ENG</span><span>ES</span></div>
          <div class="stack time"><span>4:58 PM</span><span>3/8/2024</span></div>
          <svg class="note" viewBox="0 0 16 22"><path d="M1 3h11v10H7l-3 3v-3H1z" fill="#222"/><path d="M3 6h7M3 9h7" stroke="#eee"/><circle cx="11" cy="15" r="5" fill="#d3d3d3" stroke="#444"/><text x="11" y="18" font-size="8" text-anchor="middle" fill="#222" font-family="Roboto">3</text></svg>
        </div>
      </div>

      <div class="strip">
        <svg viewBox="0 0 10 10"><path d="M2 2h6v7H2zM4 2V1h5v6H8"/></svg>
        <svg viewBox="0 0 10 10"><rect x="1.5" y="1" width="7" height="8"/></svg>
        <svg viewBox="0 0 10 10"><path d="M1 0l8 10M9 0L1 10"/></svg>
      </div>
      <div class="wm big">Activate Windows</div>
      <div class="wm">Go to Settings to activate Windows.</div>
      <pocket-dialog></pocket-dialog>
    </div>`;
  }
}
